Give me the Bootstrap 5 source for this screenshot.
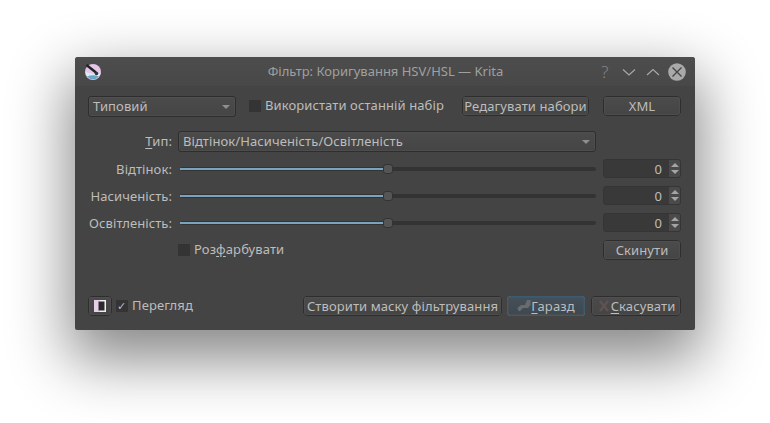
<!DOCTYPE html>
<html lang="uk">
<head>
    <meta charset="UTF-8">
    <meta name="viewport" content="width=device-width, initial-scale=1.0">
    <title>Krita filter dialog</title>
    <link href="https://cdn.jsdelivr.net/npm/bootstrap@5.3.0/dist/css/bootstrap.min.css" rel="stylesheet">
    <style>
        body {
            background-color: #fff;
            height: 423px;
            overflow: hidden;
            padding-top: 57px;
            font-family: "Noto Sans", sans-serif;
            font-size: 13px;
            letter-spacing: .1px;
            color: #bdbdbc;
        }
        .win {
            width: 620px;
            height: 273px;
            margin: 0 auto;
            background-color: #444;
            border-radius: 3px 3px 2px 2px;
            box-shadow: 0 24px 60px 6px rgba(0, 0, 0, .47);
        }
        .titlebar {
            height: 29px;
            padding: 0 6px 0 9px;
            background-image: linear-gradient(#4d4d4d, #484848);
            border-radius: 3px 3px 0 0;
            color: #a0a0a0;
            line-height: 29px;
        }
        .title-text { flex: 1; text-align: center; padding-left: 76px; letter-spacing: 0; }
        .wbtn { width: 24px; height: 29px; display: flex; align-items: center; justify-content: center; }
        .wbtn-help { font-size: 17px; font-weight: 300; color: #858585; }
        .content { padding: 10px 14px 0 13px; }
        .kbtn {
            height: 20px;
            border: 1px solid #2e2e2e;
            border-radius: 3px;
            background-image: linear-gradient(#4b4b4b, #454545);
            color: #bdbdbc;
            font-size: 13px;
            letter-spacing: .1px;
            line-height: 18px;
            padding: 0;
            text-align: center;
            white-space: nowrap;
            box-shadow: 0 0 0 .5px #555 inset;
        }
        .kbtn-right { width: 78px; margin-left: 1px; }
        .kbtn-edit { width: 127px; margin-left: auto; }
        .kbtn-xml { width: 78px; margin-left: 14px; }
        .kbtn-mask { width: 199px; margin-left: auto; }
        .kbtn-ok {
            width: 78px;
            margin-left: 5px;
            border-color: #3c5a70;
            background-image: linear-gradient(#44505a, #3f4850);
        }
        .kbtn-cancel { width: 90px; margin-left: 6px; }
        .kcombo {
            height: 21px;
            border: 1px solid #2e2e2e;
            border-radius: 3px;
            background-image: linear-gradient(#4b4b4b, #454545);
            line-height: 19px;
            padding: 0 5px 0 4px;
            box-shadow: 0 0 0 .5px #555 inset;
        }
        .kcombo-preset { width: 148px; }
        .caret-down {
            width: 0; height: 0;
            border-left: 4px solid transparent;
            border-right: 4px solid transparent;
            border-top: 4px solid #8e8e8e;
        }
        .kcheck {
            width: 12px; height: 12px;
            background-color: #343434;
            flex: none;
            color: #bdbdbc;
            font-size: 11px;
            line-height: 12px;
            text-align: center;
        }
        .kcheck-last { margin-left: 13px; }
        .kcheck-preview { margin-left: 4px; }
        .check-text { margin-left: 4px; }
        .param-grid {
            display: grid;
            grid-template-columns: 84px 418px 78px;
            column-gap: 6px;
            row-gap: 7px;
            margin-top: 14px;
            align-items: center;
        }
        .lbl { text-align: right; line-height: 19px; }
        .track {
            height: 4px;
            margin-left: 2px;
            background-color: #333;
            border-radius: 2px;
            position: relative;
            padding-top: 1px;
        }
        .track-fill {
            height: 2px;
            background-color: #7ba2bf;
        }
        .thumb {
            position: absolute;
            top: -3px;
            width: 10px; height: 10px;
            border: 1px solid #333;
            border-radius: 3px;
            background-color: #555;
        }
        .spin {
            height: 19px;
            width: 78px;
            margin: 0 0 1px 1px;
            border-radius: 3px;
            background-color: #393939;
            border: 1px solid #353535;
            line-height: 18px;
            display: flex;
            justify-content: flex-end;
        }
        .spin-val { padding-right: 7px; }
        .spin-arrows {
            width: 11px;
            background-color: #4a4a4a;
            border-radius: 0 2px 2px 0;
            display: flex;
            flex-direction: column;
            align-items: center;
            justify-content: center;
            gap: 3px;
        }
        .arr-up, .arr-down {
            width: 0; height: 0;
            border-left: 4px solid transparent;
            border-right: 4px solid transparent;
        }
        .arr-up { border-bottom: 4px solid #a5a5a5; }
        .arr-down { border-top: 4px solid #a5a5a5; }
        .split-btn { width: 24px; display: flex; align-items: center; justify-content: center; }
        .bottom-row { margin-top: 36px; }
        .txt-u { text-decoration: underline; text-underline-offset: 2px; }
    </style>
</head>
<body>
    <div class="win">
        <div class="titlebar d-flex align-items-center">
            <svg width="18" height="18" viewBox="0 0 18 18">
                <circle cx="9" cy="9" r="8" fill="#e4c6ea"/>
                <path d="M1.3 9 Q9 12 16.7 10 A8 8 0 0 1 1.3 9 Z" fill="#d8edf4"/>
                <path d="M3 13.5 Q9 11 15 13.5 A8 8 0 0 1 3 13.5 Z" fill="#6aa6c8"/>
                <path d="M2.5 2 L12 9.5" stroke="#222" stroke-width="2.4"/>
                <circle cx="12.5" cy="10.5" r="1.8" fill="#333"/>
            </svg>
            <div class="title-text">Фільтр: Коригування HSV/HSL — Krita</div>
            <div class="wbtn wbtn-help">?</div>
            <div class="wbtn"><svg width="14" height="14" viewBox="0 0 14 14"><path d="M1 4.5 L7 10 L13 4.5" fill="none" stroke="#a8a8a8" stroke-width="1.2"/></svg></div>
            <div class="wbtn"><svg width="14" height="14" viewBox="0 0 14 14"><path d="M1 10 L7 4.5 L13 10" fill="none" stroke="#a8a8a8" stroke-width="1.2"/></svg></div>
            <div class="wbtn"><svg width="18" height="18" viewBox="0 0 18 18"><circle cx="9" cy="9" r="8.8" fill="#a9a9a9"/><path d="M4.5 4.5 L13.5 13.5 M13.5 4.5 L4.5 13.5" stroke="#444" stroke-width="1.3"/></svg></div>
        </div>
        <div class="content">
            <div class="d-flex align-items-start">
                <div class="kcombo kcombo-preset d-flex align-items-center justify-content-between"><span>Типовий</span><span class="caret-down"></span></div>
                <div class="d-flex align-items-center">
                    <span class="kcheck kcheck-last"></span>
                    <span class="check-text">Використати останній набір</span>
                </div>
                <button type="button" class="kbtn kbtn-edit">Редагувати набори</button>
                <button type="button" class="kbtn kbtn-xml">XML</button>
            </div>
            <div class="param-grid">
                <div class="lbl"><span class="txt-u">Т</span>ип:</div>
                <div class="kcombo d-flex align-items-center justify-content-between"><span>Відтінок/Насиченість/Освітленість</span><span class="caret-down"></span></div>
                <div></div>

                <div class="lbl">Відтінок:</div>
                <div class="track"><div class="track-fill" style="width:49%"></div><div class="thumb" style="left:48.8%"></div></div>
                <div class="spin"><span class="spin-val">0</span><span class="spin-arrows"><span class="arr-up"></span><span class="arr-down"></span></span></div>

                <div class="lbl">Насиченість:</div>
                <div class="track"><div class="track-fill" style="width:49%"></div><div class="thumb" style="left:48.8%"></div></div>
                <div class="spin"><span class="spin-val">0</span><span class="spin-arrows"><span class="arr-up"></span><span class="arr-down"></span></span></div>

                <div class="lbl">Освітленість:</div>
                <div class="track"><div class="track-fill" style="width:49%"></div><div class="thumb" style="left:48.8%"></div></div>
                <div class="spin"><span class="spin-val">0</span><span class="spin-arrows"><span class="arr-up"></span><span class="arr-down"></span></span></div>

                <div></div>
                <div class="d-flex align-items-center"><span class="kcheck"></span><span class="check-text">Роз<span class="txt-u">ф</span>арбувати</span></div>
                <button type="button" class="kbtn kbtn-right">Скинути</button>
            </div>
            <div class="d-flex align-items-center bottom-row">
                <button type="button" class="kbtn split-btn">
                    <svg width="12" height="12" viewBox="0 0 12 12"><rect width="6" height="12" fill="#e6cfe9"/><rect x="6" width="6" height="12" fill="#f2eef3"/><rect x="4.5" y="1.5" width="6" height="9" fill="#2a2a2a"/></svg>
                </button>
                <span class="kcheck kcheck-preview">✓</span>
                <span class="check-text">Перегляд</span>
                <button type="button" class="kbtn kbtn-mask">Створити маску фільтрування</button>
                <button type="button" class="kbtn kbtn-ok d-flex align-items-center justify-content-center">
                    <svg width="14" height="14" viewBox="0 0 14 14"><path d="M0.5 9 L4 6 H8 L10 1 H13.5 V6 L11 9 H6 L3 12 H1.5 Z" fill="#6b6b6b"/></svg>
                    <span><span class="txt-u">Г</span>аразд</span>
                </button>
                <button type="button" class="kbtn kbtn-cancel d-flex align-items-center justify-content-center">
                    <svg width="14" height="14" viewBox="0 0 14 14"><path d="M3 2 L11 12 M11 2 L3 12" stroke="#5f5252" stroke-width="2.4"/></svg>
                    <span><span class="txt-u">С</span>касувати</span>
                </button>
            </div>
        </div>
    </div>
    <script src="https://cdn.jsdelivr.net/npm/bootstrap@5.3.0/dist/js/bootstrap.bundle.min.js"></script>
</body>
</html>
